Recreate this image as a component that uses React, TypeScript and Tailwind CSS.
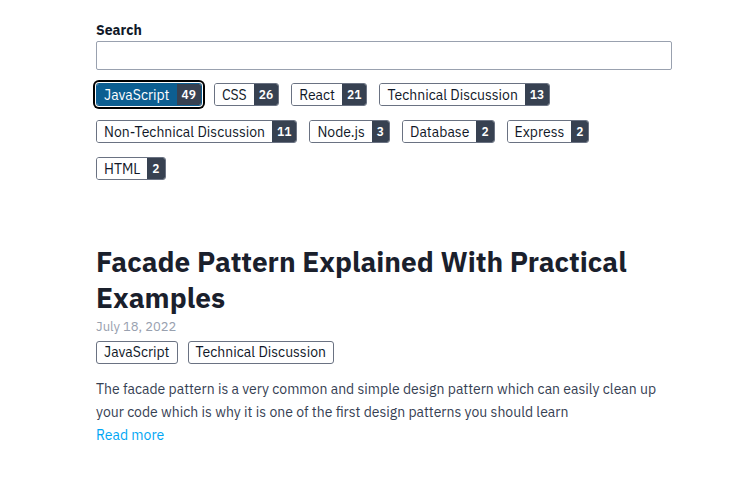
const font = { fontFamily: '"IBM Plex Sans", "Noto Sans", Roboto, sans-serif' };

type Tag = { name: string; count: number; active?: boolean };

const tags: Tag[] = [
  { name: 'JavaScript', count: 49, active: true },
  { name: 'CSS', count: 26 },
  { name: 'React', count: 21 },
  { name: 'Technical Discussion', count: 13 },
  { name: 'Non-Technical Discussion', count: 11 },
  { name: 'Node.js', count: 3 },
  { name: 'Database', count: 2 },
  { name: 'Express', count: 2 },
  { name: 'HTML', count: 2 },
];

function TagButton({ tag }: { tag: Tag }) {
  return (
    <button
      className={
        'mr-[12px] flex h-[23px] items-stretch overflow-hidden rounded-[3px] border text-[14px] leading-none ' +
        (tag.active
          ? 'border-[#0c5e91] ring-2 ring-black ring-offset-1'
          : 'border-gray-500')
      }
    >
      <span
        className={
          'flex items-center px-[7px] ' +
          (tag.active ? 'bg-[#0c5e91] text-white' : 'bg-white text-gray-900')
        }
      >
        {tag.name}
      </span>
      <span className="flex items-center bg-[#374151] px-[5px] text-[12px] font-semibold text-white">
        {tag.count}
      </span>
    </button>
  );
}

export default function App() {
  return (
    <div className="min-h-[480px] bg-white" style={font}>
      <div className="ml-[96px] w-[576px] pt-[21px]">
        <label className="block text-[14px] font-bold leading-[18px] text-gray-900">Search</label>
        <input className="mt-[2px] block h-[29px] w-full rounded-[2px] border border-gray-400 outline-none" />

        <div className="mt-[13px] flex flex-wrap gap-y-[14px]">
          {tags.map((t) => (
            <TagButton key={t.name} tag={t} />
          ))}
        </div>

        <article className="mt-[64px]">
          <h1 className="text-[28px] font-bold leading-[36px] text-[#1a202c]">
            Facade Pattern Explained With Practical Examples
          </h1>
          <p className="mt-[3px] text-[13px] leading-[16px] text-gray-400">July 18, 2022</p>
          <div className="mt-[6px] flex gap-[10px]">
            {['JavaScript', 'Technical Discussion'].map((n) => (
              <span
                key={n}
                className="flex h-[23px] items-center rounded-[3px] border border-gray-500 px-[7px] text-[14px] text-gray-900"
              >
                {n}
              </span>
            ))}
          </div>
          <p className="mt-[14px] text-[14px] leading-[23px] text-gray-700">
            The facade pattern is a very common and simple design pattern which can easily clean up
            your code which is why it is one of the first design patterns you should learn
          </p>
          <a href="#" className="block text-[14px] leading-[23px] text-sky-500">
            Read more
          </a>
        </article>
      </div>
    </div>
  );
}
